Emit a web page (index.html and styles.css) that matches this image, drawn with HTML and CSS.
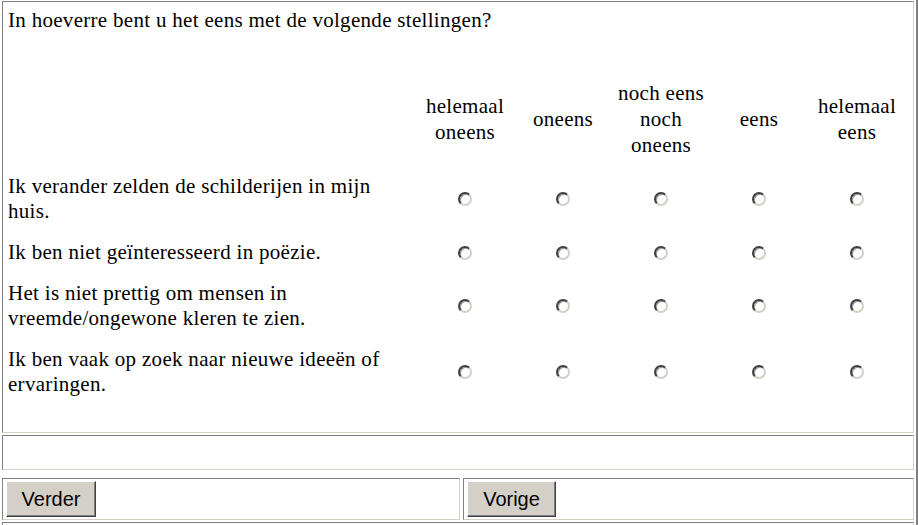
FILE: index.html
```html
<!DOCTYPE html>
<html lang="nl">
<head>
<meta charset="utf-8">
<title>Vragenlijst</title>
<link rel="stylesheet" href="styles.css">
</head>
<body>
<div class="frame">
  <div class="cell survey">
    <p class="question">In hoeverre bent u het eens met de volgende stellingen?</p>
    <div class="matrix">
      <div class="head"></div>
      <div class="head">helemaal<br>oneens</div>
      <div class="head">oneens</div>
      <div class="head">noch eens<br>noch<br>oneens</div>
      <div class="head">eens</div>
      <div class="head">helemaal<br>eens</div>

      <div class="stmt">Ik verander zelden de schilderijen in mijn huis.</div>
      <div class="opt"><input class="radio" type="radio" name="q1"></div>
      <div class="opt"><input class="radio" type="radio" name="q1"></div>
      <div class="opt"><input class="radio" type="radio" name="q1"></div>
      <div class="opt"><input class="radio" type="radio" name="q1"></div>
      <div class="opt"><input class="radio" type="radio" name="q1"></div>

      <div class="stmt">Ik ben niet geïnteresseerd in poëzie.</div>
      <div class="opt"><input class="radio" type="radio" name="q2"></div>
      <div class="opt"><input class="radio" type="radio" name="q2"></div>
      <div class="opt"><input class="radio" type="radio" name="q2"></div>
      <div class="opt"><input class="radio" type="radio" name="q2"></div>
      <div class="opt"><input class="radio" type="radio" name="q2"></div>

      <div class="stmt">Het is niet prettig om mensen in vreemde/ongewone kleren te zien.</div>
      <div class="opt"><input class="radio" type="radio" name="q3"></div>
      <div class="opt"><input class="radio" type="radio" name="q3"></div>
      <div class="opt"><input class="radio" type="radio" name="q3"></div>
      <div class="opt"><input class="radio" type="radio" name="q3"></div>
      <div class="opt"><input class="radio" type="radio" name="q3"></div>

      <div class="stmt">Ik ben vaak op zoek naar nieuwe ideeën of ervaringen.</div>
      <div class="opt"><input class="radio" type="radio" name="q4"></div>
      <div class="opt"><input class="radio" type="radio" name="q4"></div>
      <div class="opt"><input class="radio" type="radio" name="q4"></div>
      <div class="opt"><input class="radio" type="radio" name="q4"></div>
      <div class="opt"><input class="radio" type="radio" name="q4"></div>
    </div>
  </div>
  <div class="cell note"></div>
  <div class="nav">
    <div class="cell navcell left"><button class="btn btn-next" type="button">Verder</button></div>
    <div class="cell navcell right"><button class="btn btn-prev" type="button">Vorige</button></div>
  </div>
  <div class="cell tail"></div>
</div>
</body>
</html>
```
FILE: styles.css
```css
html, body {
  margin: 0;
  padding: 0;
  background: #fff;
  overflow: hidden;
}

body {
  font-family: "Liberation Serif", "DejaVu Serif", "Times New Roman", Times, serif;
  font-size: 21px;
  line-height: 25px;
  letter-spacing: 0.3px;
  color: #000;
}

.frame {
  width: 918px;
  height: 525px;
  box-sizing: border-box;
  padding: 1px 2px 0 2px;
  border-right: 2px solid #808080;
  overflow: hidden;
}

.cell {
  box-sizing: border-box;
  border: 1px solid;
  border-color: #808080 #d4d0c8 #d4d0c8 #808080;
  background: #fff;
}

.survey {
  height: 432px;
  padding: 6px 0 0 5px;
}

.question {
  margin: 0;
}

.matrix {
  display: grid;
  grid-template-columns: 408px repeat(5, 98px);
  row-gap: 16px;
  align-items: center;
  margin-top: 47px;
}

.head {
  text-align: center;
  line-height: 26px;
}

.stmt {
  padding-right: 18px;
}

.opt {
  display: flex;
  justify-content: center;
  align-items: center;
}

.radio {
  appearance: none;
  -webkit-appearance: none;
  box-sizing: border-box;
  margin: 0;
  width: 14px;
  height: 14px;
  border-radius: 50%;
  border: 2px solid;
  border-color: #404040 #d4d0c8 #d4d0c8 #404040;
  box-shadow: inset 1px 1px 0 #9a9a9a;
  background: #fff;
}

.note {
  height: 35px;
  margin-top: 2px;
}

.nav {
  display: flex;
  gap: 3px;
  margin-top: 8px;
}

.navcell {
  height: 42px;
  padding: 2px 3px;
}

.left {
  width: 458px;
}

.right {
  flex: 1;
}

.tail {
  margin-top: 2px;
  height: 40px;
}

.btn {
  font-family: "Liberation Sans", Arial, sans-serif;
  font-size: 20px;
  letter-spacing: 0;
  height: 36px;
  width: 90px;
  padding: 0;
  color: #000;
  background: #d4d0c8;
  border: 1px solid;
  border-color: #fff #404040 #404040 #fff;
  box-shadow: inset -1px -1px #808080;
}

.btn-prev {
  width: 89px;
}
```
